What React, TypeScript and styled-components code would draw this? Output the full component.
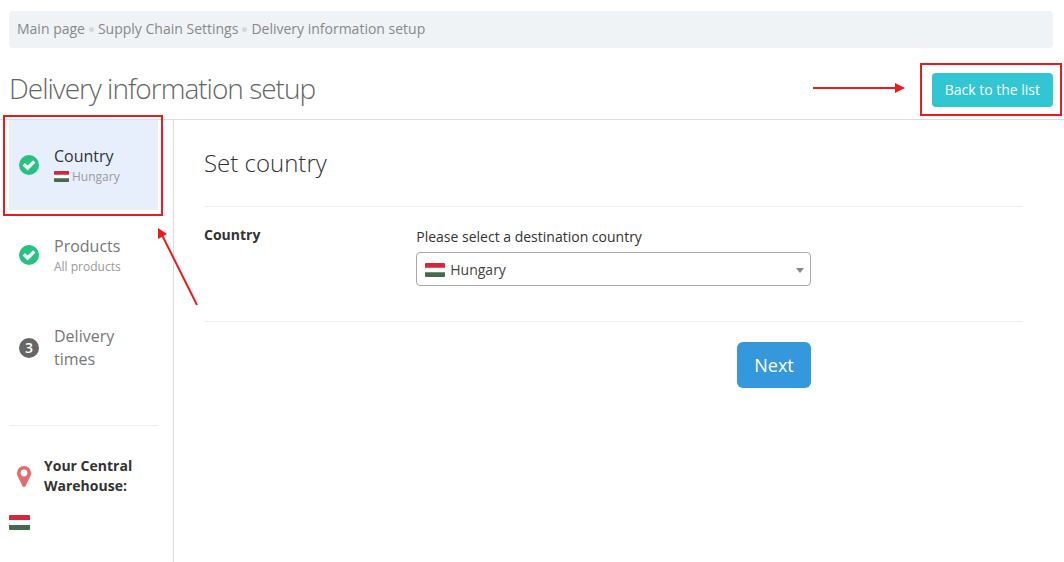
import React from "react";
import styled, { createGlobalStyle, css } from "styled-components";

const GlobalStyle = createGlobalStyle`
  *, *::before, *::after { box-sizing: border-box; }
  html, body, #root { min-height: 100vh; }
  body {
    margin: 0;
    background: #fff;
    color: #333;
    font-family: "Open Sans", "Noto Sans", sans-serif;
    font-size: 14px;
    line-height: 20px;
  }
  #root { display: flex; flex-direction: column; }
  h1, h2, p, ol { margin: 0; padding: 0; }
  ol { list-style: none; }
  a { color: inherit; text-decoration: none; }
  button { font-family: inherit; cursor: pointer; }
`;

const Page = styled.div`
  display: flex;
  flex: 1;
  flex-direction: column;
  padding-top: 11px;
  overflow-x: hidden;
`;

const Breadcrumb = styled.nav`
  margin: 0 11px 0 9px;
  padding: 8px 8px 9px;
  border-radius: 4px;
  background: #eff3f6;
  color: #888;

  ol {
    display: flex;
    flex-wrap: wrap;
    align-items: center;
  }
  li { display: flex; align-items: center; }
  li + li::before {
    content: "";
    width: 5px;
    height: 5px;
    margin: 1px 4px 0;
    border-radius: 50%;
    background: #d5d8da;
  }
`;

const Header = styled.header`
  display: flex;
  align-items: flex-start;
  justify-content: space-between;
  padding: 25px 11px 12px 9px;
  border-bottom: 1px solid #ddd;
`;

const PageTitle = styled.h1`
  color: #666;
  font-size: 28px;
  font-weight: 300;
  letter-spacing: -1px;
  line-height: 30px;
`;

const Marked = styled.div`
  position: relative;
`;

const markFrame = css`
  position: absolute;
  border: 2px solid #e81c1c;
  pointer-events: none;
`;

const ButtonFrame = styled.span`
  ${markFrame}
  inset: -10px -9px -9px -12px;
`;

const StepFrame = styled.span`
  ${markFrame}
  z-index: 1;
  inset: -5px -5px -6px -6px;
`;

const ButtonArrow = styled.svg`
  position: absolute;
  top: 9px;
  right: 148px;
`;

const StepArrow = styled.svg`
  position: absolute;
  z-index: 1;
  top: 107px;
  left: 148px;
`;

const Button = styled.button<{ $size?: "large" }>`
  display: block;
  border: 0;
  border-radius: ${(p) => (p.$size ? 6 : 4)}px;
  padding: ${(p) => (p.$size ? "10px 17px" : "7px 13px")};
  background: ${(p) => (p.$size ? "#3598dc" : "#32c5d2")};
  color: #fff;
  font-size: ${(p) => (p.$size ? 18 : 14)}px;
  line-height: ${(p) => (p.$size ? 26 : 20)}px;
`;

const Body = styled.div`
  display: flex;
  flex: 1;
`;

const Sidebar = styled.aside`
  flex: 0 0 174px;
  padding: 0 15px 30px 9px;
  border-right: 1px solid #ddd;
`;

const StepLink = styled.a<{ $active?: boolean }>`
  display: flex;
  align-items: center;
  gap: 15px;
  padding: 25px 10px;
  background: ${(p) => (p.$active ? "#e8effc" : "transparent")};
  color: ${(p) => (p.$active ? "#333" : "#777")};
`;

const StepText = styled.span`
  display: flex;
  flex-direction: column;
  font-size: 16px;
  line-height: 23px;
`;

const StepNote = styled.span`
  display: flex;
  align-items: center;
  gap: 3px;
  color: #999;
  font-size: 12px;
  line-height: 17px;
`;

const StepIcon = styled.svg`
  flex: none;
  width: 20px;
  height: 20px;
`;

const StepNumber = styled.span`
  flex: none;
  width: 20px;
  border-radius: 50%;
  background: #666;
  color: #fff;
  font-size: 14px;
  font-weight: 600;
  line-height: 20px;
  text-align: center;
`;

const Rule = styled.hr`
  height: 1px;
  margin: 0;
  border: 0;
  background: #eee;
`;

const Warehouse = styled.section`
  margin-top: 29px;
`;

const WarehouseName = styled.p`
  display: flex;
  align-items: center;
  gap: 13px;
  padding: 30px 0 19px 8px;
  font-weight: 700;
`;

const Main = styled.main`
  flex: 1;
  min-width: 0;
  padding: 30px 41px 30px 30px;
`;

const SectionTitle = styled.h2`
  margin-bottom: 30px;
  font-size: 24px;
  font-weight: 300;
  line-height: 26px;
`;

const FormRow = styled.div`
  display: grid;
  grid-template-columns: repeat(12, minmax(0, 1fr));
  column-gap: 30px;
  padding: 20px 0 35px;
`;

const RowLabel = styled.div`
  grid-column: span 3;
  font-weight: 700;
  line-height: 16px;
`;

const Field = styled.div`
  display: flex;
  grid-column: 4 / span 6;
  flex-direction: column;
  gap: 5px;
`;

const Actions = styled(FormRow)`
  padding-bottom: 0;
`;

const ActionField = styled(Field)`
  align-items: flex-end;
`;

const SelectBox = styled.div`
  position: relative;

  select {
    display: block;
    width: 100%;
    height: 34px;
    padding: 2px 30px 0 33px;
    border: 1px solid #aaa;
    border-radius: 4px;
    appearance: none;
    background: #fff;
    color: #444;
    font: inherit;
  }
  &::after {
    content: "";
    position: absolute;
    top: 16px;
    right: 7px;
    border: 4px solid transparent;
    border-top: 5px solid #888;
    border-bottom: 0;
    pointer-events: none;
  }
`;

const FlagSlot = styled.span`
  position: absolute;
  top: 11px;
  left: 9px;
  display: flex;
  pointer-events: none;
`;

const Drawing = styled.svg`
  display: block;
  flex: none;
`;

function HungaryFlag({ width, height }: { width: number; height: number }) {
  return (
    <Drawing width={width} height={height} viewBox="0 0 21 15" preserveAspectRatio="none" aria-hidden="true">
      <rect width="21" height="15" rx="1" fill="#e3e3e3" />
      <rect x="0.5" y="4" width="20" height="7" fill="#fff" />
      <path d="M1 0h19a1 1 0 0 1 1 1v4H0V1a1 1 0 0 1 1-1z" fill="#d22839" />
      <path d="M0 10h21v4a1 1 0 0 1-1 1H1a1 1 0 0 1-1-1z" fill="#426d4b" />
    </Drawing>
  );
}

function DoneIcon() {
  return (
    <StepIcon viewBox="0 0 20 20" aria-hidden="true">
      <circle cx="10" cy="10" r="10" fill="#26c281" />
      <path d="M4.800 9.300 8.600 13 15.300 6.400" fill="none" stroke="#fff" strokeWidth="3.400" />
    </StepIcon>
  );
}

function PinIcon() {
  return (
    <Drawing width="14" height="21" viewBox="0 0 14 21" aria-hidden="true">
      <path
        d="M7 0a7 7 0 0 1 7 7c0 1.200-.2 2-.6 2.900L8.400 20.200Q7.900 21 7 21T5.600 20.200L.6 9.900C.2 9 0 8.200 0 7a7 7 0 0 1 7-7zM7 3.600a3.400 3.400 0 1 0 0 6.800 3.400 3.400 0 0 0 0-6.800z"
        fill="#e56a6b"
        fillRule="evenodd"
      />
    </Drawing>
  );
}

export default function App() {
  return (
    <>
      <GlobalStyle />
      <Page>
        <Breadcrumb aria-label="Breadcrumb">
          <ol>
            <li><a href="#main">Main page</a></li>
            <li><a href="#settings">Supply Chain Settings</a></li>
            <li>Delivery information setup</li>
          </ol>
        </Breadcrumb>

        <Header>
          <PageTitle>Delivery information setup</PageTitle>
          <Marked>
            <Button type="button">Back to the list</Button>
            <ButtonFrame />
            <ButtonArrow width="92" height="12" viewBox="0 0 92 12" aria-hidden="true">
              <path d="M0 6h84" stroke="#e81c1c" strokeWidth="2" />
              <path d="M82 1l10 5-10 5z" fill="#e81c1c" />
            </ButtonArrow>
          </Marked>
        </Header>

        <Body>
          <Sidebar>
            <ol>
              <li>
                <Marked>
                  <StepLink href="#country" $active aria-current="step">
                    <DoneIcon />
                    <StepText>
                      Country
                      <StepNote>
                        <HungaryFlag width={15} height={11} />
                        Hungary
                      </StepNote>
                    </StepText>
                  </StepLink>
                  <StepFrame />
                  <StepArrow width="42" height="80" viewBox="0 0 42 80" aria-hidden="true">
                    <path d="M5 8l35 70" stroke="#e81c1c" strokeWidth="2" />
                    <path d="M1 1l9 6-9 5z" fill="#e81c1c" />
                  </StepArrow>
                </Marked>
              </li>
              <li>
                <StepLink href="#products">
                  <DoneIcon />
                  <StepText>
                    Products
                    <StepNote>All products</StepNote>
                  </StepText>
                </StepLink>
              </li>
              <li>
                <StepLink href="#times">
                  <StepNumber>3</StepNumber>
                  <StepText>Delivery times</StepText>
                </StepLink>
              </li>
            </ol>
            <Warehouse>
              <Rule />
              <WarehouseName>
                <PinIcon />
                <span>Your Central Warehouse:</span>
              </WarehouseName>
              <HungaryFlag width={21} height={15} />
            </Warehouse>
          </Sidebar>

          <Main>
            <SectionTitle>Set country</SectionTitle>
            <Rule />
            <FormRow>
              <RowLabel>Country</RowLabel>
              <Field>
                <label htmlFor="country">Please select a destination country</label>
                <SelectBox>
                  <select id="country" defaultValue="hu">
                    <option value="hu">Hungary</option>
                  </select>
                  <FlagSlot>
                    <HungaryFlag width={20} height={14} />
                  </FlagSlot>
                </SelectBox>
              </Field>
            </FormRow>
            <Rule />
            <Actions>
              <ActionField>
                <Button type="button" $size="large">Next</Button>
              </ActionField>
            </Actions>
          </Main>
        </Body>
      </Page>
    </>
  );
}
